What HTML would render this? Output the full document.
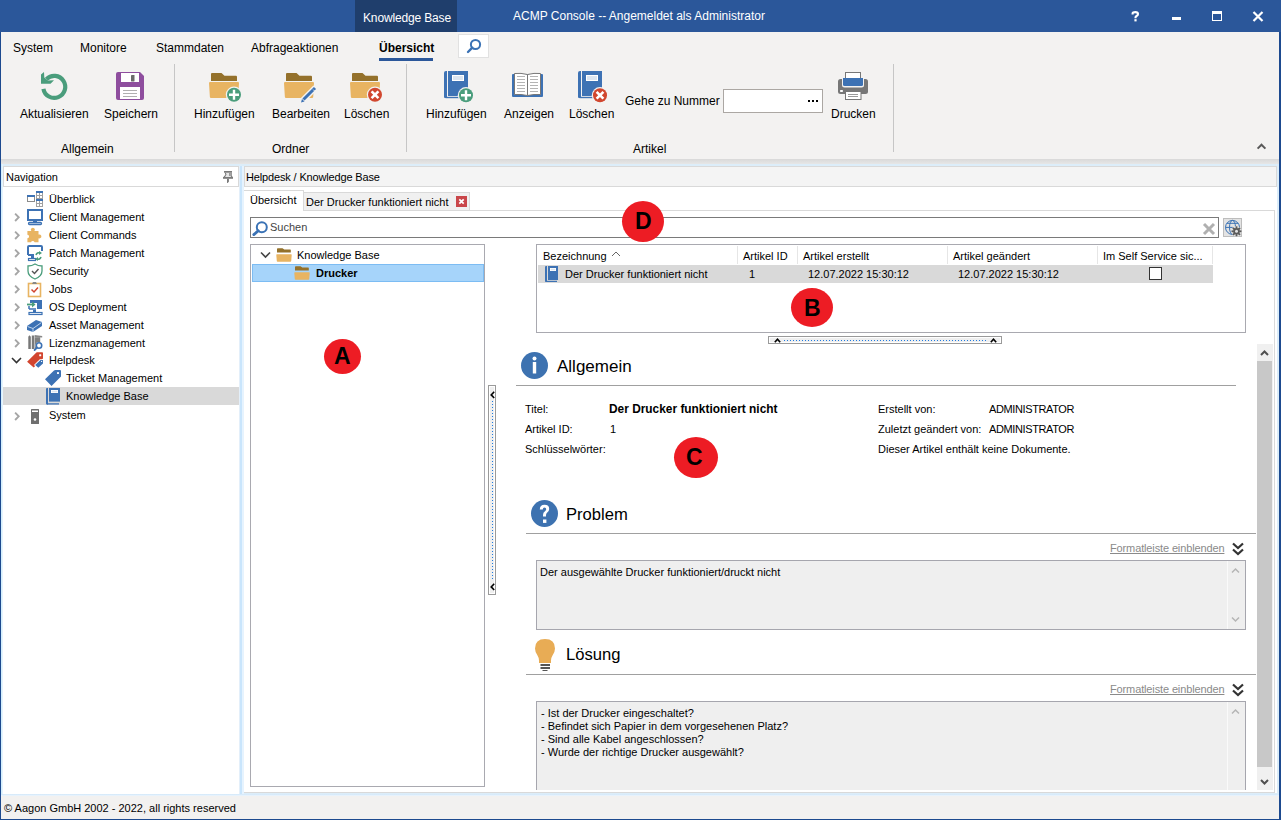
<!DOCTYPE html>
<html><head><meta charset="utf-8">
<style>
*{margin:0;padding:0;box-sizing:border-box}
html,body{width:1281px;height:820px;overflow:hidden;background:#fff;font-family:"Liberation Sans",sans-serif;color:#000}
.a{position:absolute}
.t{position:absolute;white-space:nowrap;line-height:1}
.s11{font-size:11px}
.s12{font-size:12px}
svg{position:absolute;overflow:visible}
</style></head><body>
<!-- window border -->
<div class="a" style="left:0;top:0;width:1281px;height:820px;background:#1d4a8f"></div>
<div class="a" style="left:0;top:0;width:1281px;height:32px;background:#2b579a"></div>
<!-- title bar -->
<div class="a" style="left:355px;top:0;width:102px;height:32px;background:#1f3e6c"></div>
<div class="t s12" style="left:363px;top:12px;color:#fff;letter-spacing:-0.15px">Knowledge Base</div>
<div class="t s12" style="left:513px;top:10px;color:#fff">ACMP Console -- Angemeldet als Administrator</div>
<svg style="left:1131px;top:11px" width="9" height="11" viewBox="0 0 9 11"><path d="M1.6 3.4V2.6Q1.6 1.1 4.3 1.1Q7 1.1 7 3Q7 4.3 5.6 5Q4.5 5.6 4.5 6.6V7.2" fill="none" stroke="#fff" stroke-width="2.1"/><rect x="3.4" y="8.2" width="2.2" height="2.2" fill="#fff"/></svg>
<div class="a" style="left:1172px;top:17px;width:9px;height:3px;background:#fff"></div>
<div class="a" style="left:1212px;top:11px;width:10px;height:10px;border:1px solid #fff;border-top-width:3px"></div>
<svg style="left:1252px;top:11px" width="12" height="11"><path d="M1.5 1L10.5 10M10.5 1L1.5 10" stroke="#fff" stroke-width="2.2"/></svg>

<!-- ribbon -->
<div class="a" style="left:1px;top:32px;width:1278px;height:127px;background:#f3f2f1"></div>
<div class="a" style="left:1px;top:159px;width:1278px;height:5px;background:linear-gradient(#d9d9d9,#e6e6e6)"></div>
<div class="a" style="left:1px;top:164px;width:1278px;height:632px;background:linear-gradient(90deg,#d4effd 0 1px,#e6f4fd 1px 2px,#dcedf9 2px)"></div>

<!-- ribbon tabs -->
<div class="t s12" style="left:13px;top:42px">System</div>
<div class="t s12" style="left:80px;top:42px">Monitore</div>
<div class="t s12" style="left:156px;top:42px">Stammdaten</div>
<div class="t s12" style="left:251px;top:42px">Abfrageaktionen</div>
<div class="t s12" style="left:379px;top:42px;font-weight:bold">Übersicht</div>
<div class="a" style="left:379px;top:58px;width:54px;height:3px;background:#2b579a"></div>
<div class="a" style="left:458px;top:34px;width:31px;height:24px;background:#fff;border:1px solid #e1e1e1"></div>
<svg style="left:466px;top:38px" width="16" height="16"><circle cx="9.5" cy="6.5" r="4.6" fill="none" stroke="#3a72b5" stroke-width="2"/><path d="M6.3 9.7L2 14" stroke="#3a72b5" stroke-width="2.4" stroke-linecap="round"/></svg>

<!-- separators -->
<div class="a" style="left:174px;top:64px;width:1px;height:88px;background:#c6c6c6"></div>
<div class="a" style="left:406px;top:64px;width:1px;height:88px;background:#c6c6c6"></div>
<div class="a" style="left:893px;top:64px;width:1px;height:88px;background:#c6c6c6"></div>

<!-- Allgemein group -->
<svg style="left:36px;top:68px" width="36" height="36" viewBox="0 0 36 36"><path d="M7.42 20.81A11 11 0 1 0 10.47 11.12" fill="none" stroke="#4a9d7c" stroke-width="4.2"/><path d="M5 6.5L8 4L8.3 9.6L12 12.6L18 12.3L14.5 15.8H5Z" fill="#4a9d7c"/></svg>
<svg style="left:116px;top:72px" width="28" height="28" viewBox="0 0 28 28"><path d="M2 0H24L28 4V26Q28 28 26 28H2Q0 28 0 26V2Q0 0 2 0Z" fill="#8e4e9e"/><rect x="5" y="1" width="18" height="9" fill="#fff"/><rect x="15" y="3" width="3.5" height="6.5" rx=".4" fill="#6a6a6a"/><rect x="4" y="15" width="20" height="12" fill="#fff"/><path d="M7 18.5H21M7 21.5H21M7 24.5H21" stroke="#b0b0b0" stroke-width="1"/></svg>
<div class="t s12" style="left:20px;top:108px">Aktualisieren</div>
<div class="t s12" style="left:104px;top:108px">Speichern</div>
<div class="t s12" style="left:61px;top:143px">Allgemein</div>

<!-- Ordner group -->
<svg style="left:204px;top:68px" width="40" height="40" viewBox="0 0 40 40"><path d="M8 5H17.5L20.5 7.8H32Q33 7.8 33 9V13H7V6Q7 5 8 5Z" fill="#94712b"/><path d="M6 14H34Q35 14 35 15.2L34.2 29Q34.1 30 33 30H7Q6 30 5.9 29L5 15.2Q5 14 6 14Z" fill="#e8b462"/><circle cx="30" cy="26.8" r="8.2" fill="#f3f2f1"/><circle cx="30" cy="26.8" r="7" fill="#4a9d7c"/><path d="M30 21.8V31.8M25 26.8H35" stroke="#fff" stroke-width="2.4"/></svg>
<svg style="left:279px;top:68px" width="40" height="40" viewBox="0 0 40 40"><path d="M8 5H17.5L20.5 7.8H32Q33 7.8 33 9V13H7V6Q7 5 8 5Z" fill="#94712b"/><path d="M6 14H34Q35 14 35 15.2L34.2 29Q34.1 30 33 30H7Q6 30 5.9 29L5 15.2Q5 14 6 14Z" fill="#e8b462"/><path d="M36.5 19.5L23 33" stroke="#f3f2f1" stroke-width="6"/><path d="M36 20L24.5 31.5" stroke="#3d72b4" stroke-width="3"/><path d="M22 34.5L23 31L25.5 33.5Z" fill="#3d72b4"/><path d="M34.2 21.6L35.6 23" stroke="#fff" stroke-width="0.8"/></svg>
<svg style="left:345px;top:68px" width="40" height="40" viewBox="0 0 40 40"><path d="M8 5H17.5L20.5 7.8H32Q33 7.8 33 9V13H7V6Q7 5 8 5Z" fill="#94712b"/><path d="M6 14H34Q35 14 35 15.2L34.2 29Q34.1 30 33 30H7Q6 30 5.9 29L5 15.2Q5 14 6 14Z" fill="#e8b462"/><circle cx="30" cy="26.8" r="8.2" fill="#f3f2f1"/><circle cx="30" cy="26.8" r="7" fill="#d1472f"/><path d="M26.6 23.4L33.4 30.2M33.4 23.4L26.6 30.2" stroke="#fff" stroke-width="2.6"/></svg>
<div class="t s12" style="left:194px;top:108px">Hinzufügen</div>
<div class="t s12" style="left:272px;top:108px">Bearbeiten</div>
<div class="t s12" style="left:344px;top:108px">Löschen</div>
<div class="t s12" style="left:272px;top:143px">Ordner</div>

<!-- Artikel group -->
<svg style="left:438px;top:66px" width="40" height="40" viewBox="0 0 40 40"><path d="M8 5H9V32H7Q6 32 6 31V7Q6 5 8 5Z" fill="#3d72b4"/><rect x="10" y="5" width="20" height="25" fill="#3d72b4"/><path d="M7.5 31.5H21" stroke="#3d72b4" stroke-width="1.4"/><rect x="14" y="9" width="12" height="6" fill="#fff"/><rect x="15" y="10" width="10" height="4" fill="#dbe5f0"/><circle cx="28" cy="29.3" r="8.2" fill="#f3f2f1"/><circle cx="28" cy="29.3" r="7" fill="#4a9d7c"/><path d="M28 24.3V34.3M23 29.3H33" stroke="#fff" stroke-width="2.4"/></svg>
<svg style="left:507px;top:66px" width="40" height="40" viewBox="0 0 40 40"><rect x="5" y="8" width="31" height="23" rx="1" fill="#3d72b4"/><path d="M7.5 7.5Q14 6.8 20.5 8.5V29.5Q14 28 7.5 28.5Z" fill="#fff" stroke="#777" stroke-width="1"/><path d="M33.5 7.5Q27 6.8 20.5 8.5V29.5Q27 28 33.5 28.5Z" fill="#fff" stroke="#777" stroke-width="1"/><path d="M10 10.5H18M23 10.5H31" stroke="#b4b4b4" stroke-width="1"/><path d="M10 13.5H18M23 13.5H31" stroke="#b4b4b4" stroke-width="1"/><path d="M10 16.5H18M23 16.5H31" stroke="#b4b4b4" stroke-width="1"/><path d="M10 19.5H18M23 19.5H31" stroke="#b4b4b4" stroke-width="1"/><path d="M10 22.5H18M23 22.5H31" stroke="#b4b4b4" stroke-width="1"/><path d="M10 25.5H18M23 25.5H31" stroke="#b4b4b4" stroke-width="1"/></svg>
<svg style="left:572px;top:66px" width="40" height="40" viewBox="0 0 40 40"><path d="M8 5H9V32H7Q6 32 6 31V7Q6 5 8 5Z" fill="#3d72b4"/><rect x="10" y="5" width="20" height="25" fill="#3d72b4"/><path d="M7.5 31.5H21" stroke="#3d72b4" stroke-width="1.4"/><rect x="14" y="9" width="12" height="6" fill="#fff"/><rect x="15" y="10" width="10" height="4" fill="#dbe5f0"/><circle cx="28" cy="29.3" r="8.2" fill="#f3f2f1"/><circle cx="28" cy="29.3" r="7" fill="#d1472f"/><path d="M24.6 25.9L31.4 32.7M31.4 25.9L24.6 32.7" stroke="#fff" stroke-width="2.6"/></svg>
<div class="t s12" style="left:426px;top:108px">Hinzufügen</div>
<div class="t s12" style="left:504px;top:108px">Anzeigen</div>
<div class="t s12" style="left:569px;top:108px">Löschen</div>
<div class="t s12" style="left:625px;top:95px">Gehe zu Nummer</div>
<div class="a" style="left:723px;top:89px;width:100px;height:24px;background:#fff;border:1px solid #aba7a3"></div>
<div class="a" style="left:808px;top:100px;width:2px;height:2px;background:#000"></div><div class="a" style="left:812px;top:100px;width:2px;height:2px;background:#000"></div><div class="a" style="left:816px;top:100px;width:2px;height:2px;background:#000"></div>
<svg style="left:832px;top:66px" width="40" height="40" viewBox="0 0 40 40"><rect x="13.5" y="6.5" width="15" height="7" fill="#fff" stroke="#777" stroke-width="1"/><rect x="6" y="13" width="30" height="15" rx="2.5" fill="#777"/><path d="M10 12H32V19Q32 21.5 29.5 21.5H12.5Q10 21.5 10 19Z" fill="#f3f2f1"/><path d="M11 12H31V18.5Q31 20 29.5 20H12.5Q11 20 11 18.5Z" fill="#3d72b4"/><rect x="8" y="24" width="3" height="2" rx=".8" fill="#fff"/><rect x="13.5" y="25.5" width="15.5" height="8" fill="#fff" stroke="#777" stroke-width="1"/><path d="M16 28.5H26M16 30.5H26" stroke="#999" stroke-width="1"/></svg>
<div class="t s12" style="left:831px;top:108px">Drucken</div>
<div class="t s12" style="left:633px;top:143px">Artikel</div>
<svg style="left:1256px;top:143px" width="11" height="8"><path d="M1.6 5.6L5.5 1.7L9.4 5.6" fill="none" stroke="#595959" stroke-width="2"/></svg>

<!-- NAV PANEL -->
<div class="a" style="left:3px;top:166px;width:236px;height:628px;background:#fff"></div>
<div class="a" style="left:3px;top:166px;width:236px;height:21px;background:#fff;border:1px solid #d9d9d9"></div>
<div class="t s11" style="left:6px;top:172px">Navigation</div>
<svg style="left:218px;top:166px" width="20" height="20" viewBox="0 0 20 20"><path d="M7 6.5H13V11H6.5Q8.5 9 7.5 8Z" fill="#e6e6e6"/><rect x="11" y="7" width="1.6" height="3" fill="#9a9a9a"/><rect x="6" y="5" width="8" height="1.7" fill="#7a7a7a"/><path d="M7.2 6.8Q8.6 8.3 7.4 9.6L6 11M13.2 6.8V10L14.2 11" fill="none" stroke="#7a7a7a" stroke-width="1.1"/><rect x="5" y="11" width="10" height="1.8" fill="#7a7a7a"/><path d="M9 12.8H10.9V15.8L9.6 17H9Z" fill="#7a7a7a"/></svg>
<div class="a" style="left:3px;top:387px;width:236px;height:18px;background:#d9d9d9"></div>
<svg style="left:27px;top:191px" width="16" height="16" viewBox="0 0 16 16"><rect x="0.5" y="4.5" width="7" height="6" fill="#fff" stroke="#8c8c8c"/><rect x="0" y="4" width="8" height="2" fill="#3d72b4"/><rect x="9.5" y="1.5" width="6" height="6" fill="#fff" stroke="#a0a0a0"/><rect x="9" y="0" width="7" height="2" fill="#3d72b4"/><path d="M12.5 2V7M10 4.5H15" stroke="#a0a0a0"/><rect x="9.5" y="9.5" width="6" height="6" fill="#fff" stroke="#a0a0a0"/><rect x="9" y="8" width="7" height="2" fill="#3d72b4"/><path d="M12.5 10V15M10 12.5H15" stroke="#a0a0a0"/></svg>
<div class="t s11" style="left:49px;top:194px">Überblick</div>
<svg style="left:27px;top:209px" width="16" height="16" viewBox="0 0 16 16"><rect x="1" y="1" width="14" height="10" fill="#fff" stroke="#3d72b4" stroke-width="2"/><rect x="6" y="11" width="4" height="2" fill="#3d72b4"/><rect x="1.5" y="13.5" width="13" height="2" rx="1" fill="#fff" stroke="#3d72b4" stroke-width="1.3"/></svg>
<div class="t s11" style="left:49px;top:212px">Client Management</div>
<svg style="left:13px;top:212px" width="8" height="10"><path d="M2.1 1.6L5.7 5.3L2.1 9" fill="none" stroke="#a6a6a6" stroke-width="1.9"/></svg>
<svg style="left:27px;top:227px" width="16" height="16" viewBox="0 0 16 16"><path d="M0.4 4H4.3A2 2 0 1 1 7.4 4H11.5V7.6A2 2 0 1 1 11.5 11.2V15.3H7.6A1.9 1.9 0 0 0 4 15.3H0.4V11.2A1.7 1.7 0 0 0 0.4 7.8Z" fill="#e8b462"/></svg>
<div class="t s11" style="left:49px;top:230px">Client Commands</div>
<svg style="left:13px;top:230px" width="8" height="10"><path d="M2.1 1.6L5.7 5.3L2.1 9" fill="none" stroke="#a6a6a6" stroke-width="1.9"/></svg>
<svg style="left:27px;top:245px" width="16" height="16" viewBox="0 0 16 16"><path d="M1 10V2Q1 1 2 1H14Q15 1 15 2V6" fill="none" stroke="#3d72b4" stroke-width="2"/><path d="M1 10H7" stroke="#3d72b4" stroke-width="2"/><rect x="4" y="11" width="3" height="2" fill="#3d72b4"/><rect x="1.5" y="13.5" width="7" height="2" fill="#fff" stroke="#3d72b4" stroke-width="1.2"/><path d="M9 10Q10 7 13 8M14 12Q13 15 10 14" fill="none" stroke="#4a9d7c" stroke-width="1.6"/><path d="M12 6L15 8L12 10Z M11 12L8 14L11 16Z" fill="#4a9d7c"/></svg>
<div class="t s11" style="left:49px;top:248px">Patch Management</div>
<svg style="left:13px;top:248px" width="8" height="10"><path d="M2.1 1.6L5.7 5.3L2.1 9" fill="none" stroke="#a6a6a6" stroke-width="1.9"/></svg>
<svg style="left:27px;top:263px" width="16" height="16" viewBox="0 0 16 16"><path d="M8 1Q11 3 15 3V8Q15 13 8 16Q1 13 1 8V3Q5 3 8 1Z" fill="#fff" stroke="#4a9d7c" stroke-width="1.3"/><path d="M5 8L7.5 10.5L11.5 6" fill="none" stroke="#555" stroke-width="1.4"/></svg>
<div class="t s11" style="left:49px;top:266px">Security</div>
<svg style="left:13px;top:266px" width="8" height="10"><path d="M2.1 1.6L5.7 5.3L2.1 9" fill="none" stroke="#a6a6a6" stroke-width="1.9"/></svg>
<svg style="left:27px;top:281px" width="16" height="16" viewBox="0 0 16 16"><rect x="1.5" y="2.5" width="12" height="13" fill="#fff" stroke="#e8b462" stroke-width="1.6"/><path d="M5 3L6 1H9L10 3Z" fill="#888"/><path d="M4.5 8.5L7 11L11 6.5" fill="none" stroke="#d2452f" stroke-width="1.5"/></svg>
<div class="t s11" style="left:49px;top:284px">Jobs</div>
<svg style="left:13px;top:284px" width="8" height="10"><path d="M2.1 1.6L5.7 5.3L2.1 9" fill="none" stroke="#a6a6a6" stroke-width="1.9"/></svg>
<svg style="left:27px;top:299px" width="16" height="16" viewBox="0 0 16 16"><path d="M3 1H15V10H10V4H3Z" fill="#3d72b4"/><path d="M2 10H9M2 7V10" fill="none" stroke="#3d72b4" stroke-width="1.5"/><rect x="6" y="11" width="3" height="2" fill="#3d72b4"/><rect x="2" y="13.5" width="13" height="2" fill="#fff" stroke="#3d72b4" stroke-width="1.2"/><path d="M0 5.5H6" stroke="#4a9d7c" stroke-width="1.8"/><path d="M5 2.5L8.5 5.5L5 8.5Z" fill="#4a9d7c"/></svg>
<div class="t s11" style="left:49px;top:302px">OS Deployment</div>
<svg style="left:13px;top:302px" width="8" height="10"><path d="M2.1 1.6L5.7 5.3L2.1 9" fill="none" stroke="#a6a6a6" stroke-width="1.9"/></svg>
<svg style="left:27px;top:317px" width="16" height="16" viewBox="0 0 16 16"><path d="M0 9L9 3L15 5L15 9L6 15L0 13Z" fill="#3d72b4"/><path d="M0.5 9.5L6 11.5L14.5 5.5M6 11.5V15" fill="none" stroke="#cfe0f3" stroke-width="0.9"/></svg>
<div class="t s11" style="left:49px;top:320px">Asset Management</div>
<svg style="left:13px;top:320px" width="8" height="10"><path d="M2.1 1.6L5.7 5.3L2.1 9" fill="none" stroke="#a6a6a6" stroke-width="1.9"/></svg>
<svg style="left:27px;top:335px" width="16" height="16" viewBox="0 0 16 16"><path d="M1.3 1.8L2.5 0.2L3.8 1.8V14H1.3Z" fill="#777"/><rect x="4.8" y="0.5" width="2.4" height="13.5" fill="#7a7a7a"/><path d="M7.6 0L15.2 0.9V2.6L7.6 2Z" fill="#888"/><rect x="7.6" y="2.2" width="5.6" height="11.8" fill="#7f7f7f"/><circle cx="12" cy="10.5" r="3.5" fill="#fff"/><circle cx="12" cy="10.5" r="2.7" fill="#fff" stroke="#3d72b4" stroke-width="1.6"/><path d="M10 12.6L7.6 15" stroke="#3d72b4" stroke-width="1.8" stroke-linecap="round"/></svg>
<div class="t s11" style="left:49px;top:338px">Lizenzmanagement</div>
<svg style="left:13px;top:338px" width="8" height="10"><path d="M2.1 1.6L5.7 5.3L2.1 9" fill="none" stroke="#a6a6a6" stroke-width="1.9"/></svg>
<svg style="left:27px;top:353px" width="16" height="16" viewBox="0 0 16 16"><path d="M0.1 8.7L9.4 -0.6Q9.6 -.8 10 -.8H15.2Q16 -.8 16 0V5.5L6.7 14.6Z" fill="#d2452f"/><rect x="12.2" y="1.2" width="2" height="2" rx=".5" fill="#fff"/><path d="M7 12L12.8 6.2H16.8V10.8L11.3 16.3Z" fill="#fff"/><path d="M8.2 12L13.5 7H16V10.5L11.3 14.8Z" fill="#3d72b4"/><circle cx="14.6" cy="8.4" r=".6" fill="#fff"/></svg>
<div class="t s11" style="left:49px;top:355px">Helpdesk</div>
<svg style="left:11px;top:357px" width="11" height="7"><path d="M1 1L5.5 5.5L10 1" fill="none" stroke="#333" stroke-width="1.6"/></svg>
<svg style="left:45px;top:371px" width="16" height="16" viewBox="0 0 16 16"><path d="M0 8.2L9 -0.4Q9.6 -1 10.4 -1H15Q16 -1 16 0V5.6L6.5 15Z" fill="#3d72b4"/><rect x="12" y="1" width="2" height="2" rx=".6" fill="#fff"/></svg>
<div class="t s11" style="left:66px;top:373px">Ticket Management</div>
<svg style="left:45px;top:389px" width="16" height="16" viewBox="0 0 16 16"><path d="M2 -1H3V15.5H2Q1 15.5 1 14.5V0Q1 -1 2 -1Z" fill="#3d72b4"/><rect x="4" y="-1" width="11" height="13.6" fill="#3d72b4"/><path d="M1.8 14.9H14" stroke="#3d72b4" stroke-width="1.3"/><rect x="6" y="1" width="7" height="3" fill="#fff"/><rect x="6.7" y="1.7" width="5.6" height="1.6" fill="#dbe5f0"/></svg>
<div class="t s11" style="left:66px;top:391px">Knowledge Base</div>
<svg style="left:27px;top:408px" width="16" height="16" viewBox="0 0 16 16"><rect x="4" y="1" width="8" height="15" rx=".5" fill="#6f6f6f"/><rect x="5" y="2.5" width="6" height="1.5" fill="#fff"/><circle cx="8" cy="11.5" r="1.3" fill="#fff"/></svg>
<div class="t s11" style="left:49px;top:410px">System</div>
<svg style="left:13px;top:411px" width="8" height="10"><path d="M2.1 1.6L5.7 5.3L2.1 9" fill="none" stroke="#a6a6a6" stroke-width="1.9"/></svg>

<!-- MAIN PANEL -->
<div class="a" style="left:239px;top:166px;width:5px;height:628px;background:linear-gradient(90deg,#e3effa 0 1px,#c9e5fc 1px 3px,#e6f3fe 3px 5px)"></div>
<div class="a" style="left:244px;top:166px;width:1033px;height:627px;background:#fff"></div>
<div class="a" style="left:244px;top:166px;width:1033px;height:21px;background:#f4f4f4;border:1px solid #d9d9d9"></div>
<div class="t s11" style="left:246px;top:172px;letter-spacing:-0.15px">Helpdesk / Knowledge Base</div>
<!-- tab content border -->
<div class="a" style="left:244px;top:210px;width:1031px;height:583px;border:1px solid #d9d9d9;border-left:none"></div>
<div class="a" style="left:244px;top:190px;width:60px;height:21px;background:#fff;border:1px solid #d9d9d9;border-bottom:none;border-left:none"></div>
<div class="t s11" style="left:250px;top:195px">Übersicht</div>
<div class="a" style="left:303px;top:192px;width:167px;height:19px;background:#f0f0f0;border:1px solid #d9d9d9"></div>
<div class="t s11" style="left:306px;top:197px">Der Drucker funktioniert nicht</div>
<div class="a" style="left:456px;top:196px;width:11px;height:11px;background:#c9464a"></div>
<svg style="left:456px;top:196px" width="11" height="11"><path d="M3.3 3.3L7.7 7.7M7.7 3.3L3.3 7.7" stroke="#fff" stroke-width="1.7"/></svg>

<!-- search -->
<div class="a" style="left:250px;top:217px;width:969px;height:21px;background:#fff;border:1px solid #7a7a7a"></div>
<svg style="left:252px;top:220px" width="16" height="16" viewBox="0 0 16 16"><circle cx="9.8" cy="7.2" r="5" fill="none" stroke="#3a72b5" stroke-width="2"/><path d="M6.3 10.8L1.8 14.6" stroke="#3a72b5" stroke-width="2.8" stroke-linecap="round"/></svg>
<div class="t s11" style="left:270px;top:222px;color:#444">Suchen</div>
<svg style="left:1202px;top:222px" width="14" height="14"><path d="M2 2L12 12M12 2L2 12" stroke="#b0b0b0" stroke-width="3"/></svg>
<div class="a" style="left:1223px;top:218px;width:19px;height:19px;background:#e3e3e3;border:1px solid #bdbdbd"></div>
<svg style="left:1220px;top:215px" width="26" height="26" viewBox="0 0 26 26"><g fill="none" stroke="#3a72b5" stroke-width="1"><circle cx="12.5" cy="12.4" r="7"/><ellipse cx="12.5" cy="12.4" rx="3" ry="7"/><path d="M6.7 8.3H18.3M5.5 12.4H12.8"/></g><circle cx="16.5" cy="16.3" r="5.2" fill="#e3e3e3"/><rect x="15.6" y="11.3" width="1.8" height="2.2" fill="#5a5a5a" transform="rotate(0 16.5 16.3)"/><rect x="15.6" y="11.3" width="1.8" height="2.2" fill="#5a5a5a" transform="rotate(45 16.5 16.3)"/><rect x="15.6" y="11.3" width="1.8" height="2.2" fill="#5a5a5a" transform="rotate(90 16.5 16.3)"/><rect x="15.6" y="11.3" width="1.8" height="2.2" fill="#5a5a5a" transform="rotate(135 16.5 16.3)"/><rect x="15.6" y="11.3" width="1.8" height="2.2" fill="#5a5a5a" transform="rotate(180 16.5 16.3)"/><rect x="15.6" y="11.3" width="1.8" height="2.2" fill="#5a5a5a" transform="rotate(225 16.5 16.3)"/><rect x="15.6" y="11.3" width="1.8" height="2.2" fill="#5a5a5a" transform="rotate(270 16.5 16.3)"/><rect x="15.6" y="11.3" width="1.8" height="2.2" fill="#5a5a5a" transform="rotate(315 16.5 16.3)"/><circle cx="16.5" cy="16.3" r="3.3" fill="#5a5a5a"/><circle cx="16.5" cy="16.3" r="1.5" fill="#e3e3e3"/></svg>

<!-- tree box -->
<div class="a" style="left:250px;top:244px;width:235px;height:543px;border:1px solid #a9a9b0"></div>
<svg style="left:260px;top:251px" width="11" height="8"><path d="M1 1.5L5.5 6L10 1.5" fill="none" stroke="#444" stroke-width="1.6"/></svg>
<svg style="left:276px;top:248px" width="17" height="14" viewBox="0 0 17 14"><path d="M1.8 0.2H6.5L8.3 1.6H14.3Q14.8 1.6 14.8 2.2V4.5H1V1Q1 .2 1.8 .2Z" fill="#94712b"/><path d="M0.8 6.3H15.2Q15.7 6.3 15.7 6.9L15.2 13Q15.1 13.7 14.5 13.7H1.5Q0.9 13.7 0.8 13L0.3 6.9Q0.3 6.3 0.8 6.3Z" fill="#e8b462"/></svg>
<div class="t s11" style="left:297px;top:250px">Knowledge Base</div>
<div class="a" style="left:252px;top:264px;width:232px;height:18px;background:#a6d4fa;border:1px solid #7cbcf3"></div>
<svg style="left:294px;top:266px" width="17" height="14" viewBox="0 0 17 14"><path d="M1.8 0.2H6.5L8.3 1.6H14.3Q14.8 1.6 14.8 2.2V4.5H1V1Q1 .2 1.8 .2Z" fill="#94712b"/><path d="M0.8 6.3H15.2Q15.7 6.3 15.7 6.9L15.2 13Q15.1 13.7 14.5 13.7H1.5Q0.9 13.7 0.8 13L0.3 6.9Q0.3 6.3 0.8 6.3Z" fill="#e8b462"/></svg>
<div class="t s11" style="left:316px;top:268px;font-weight:bold">Drucker</div>

<!-- grid -->
<div class="a" style="left:536px;top:244px;width:710px;height:89px;border:1px solid #a9a9b0"></div>
<div class="a" style="left:538px;top:265px;width:675px;height:18px;background:#d9d9d9"></div>
<div class="a" style="left:737px;top:246px;width:1px;height:18px;background:#e6e6e6"></div>
<div class="a" style="left:797px;top:246px;width:1px;height:18px;background:#e6e6e6"></div>
<div class="a" style="left:947px;top:246px;width:1px;height:18px;background:#e6e6e6"></div>
<div class="a" style="left:1097px;top:246px;width:1px;height:18px;background:#e6e6e6"></div>
<div class="a" style="left:1212px;top:246px;width:1px;height:18px;background:#e6e6e6"></div>
<div class="t s11" style="left:543px;top:251px">Bezeichnung</div>
<svg style="left:611px;top:251px" width="10" height="6"><path d="M1 5L5 1L9 5" fill="none" stroke="#666" stroke-width="1"/></svg>
<div class="t s11" style="left:743px;top:251px">Artikel ID</div>
<div class="t s11" style="left:803px;top:251px">Artikel erstellt</div>
<div class="t s11" style="left:953px;top:251px">Artikel geändert</div>
<div class="t s11" style="left:1103px;top:251px">Im Self Service sic...</div>
<svg style="left:540px;top:262px" width="30" height="24" viewBox="0 0 30 24"><path d="M6 4H7V20H6Q5 20 5 19V5Q5 4 6 4Z" fill="#3d72b4"/><rect x="8" y="4" width="10" height="14" fill="#3d72b4"/><path d="M5.6 19.4H17" stroke="#3d72b4" stroke-width="1.2"/><rect x="10" y="6" width="6" height="3" fill="#fff"/><rect x="10.7" y="6.7" width="4.6" height="1.6" fill="#dbe5f0"/></svg>
<div class="t s11" style="left:565px;top:269px">Der Drucker funktioniert nicht</div>
<div class="t s11" style="left:749px;top:269px">1</div>
<div class="t s11" style="left:808px;top:269px">12.07.2022 15:30:12</div>
<div class="t s11" style="left:958px;top:269px">12.07.2022 15:30:12</div>
<div class="a" style="left:1149px;top:267px;width:13px;height:13px;background:#fff;border:1px solid #333"></div>

<!-- splitter handle -->
<div class="a" style="left:768px;top:336px;width:234px;height:8px;border:1px solid #9a9a9a;background:#fff"></div>
<div class="a" style="left:770px;top:338px;width:230px;height:4px;background:#efefef"></div>
<div class="a" style="left:784px;top:340px;width:203px;height:1px;background:repeating-linear-gradient(90deg,#1f7ae0 0 1px,transparent 1px 3px)"></div>
<svg style="left:774px;top:338px" width="8" height="5"><path d="M0.8 4.2L3.5 1.2L6.2 4.2" fill="none" stroke="#000" stroke-width="1.6"/></svg>
<svg style="left:990px;top:338px" width="8" height="5"><path d="M0.8 4.2L3.5 1.2L6.2 4.2" fill="none" stroke="#000" stroke-width="1.6"/></svg>

<!-- vertical collapse bar -->
<div class="a" style="left:488px;top:385px;width:8px;height:210px;border:1px solid #9a9a9a;background:#fff"></div>
<div class="a" style="left:490px;top:387px;width:4px;height:206px;background:#efefef"></div>
<div class="a" style="left:492px;top:401px;width:1px;height:178px;background:repeating-linear-gradient(180deg,#1f7ae0 0 1px,transparent 1px 3px)"></div>
<svg style="left:490px;top:391px" width="5" height="8"><path d="M4.2 0.8L1.2 3.9L4.2 7" fill="none" stroke="#000" stroke-width="1.6"/></svg>
<svg style="left:490px;top:583px" width="5" height="8"><path d="M4.2 0.8L1.2 3.9L4.2 7" fill="none" stroke="#000" stroke-width="1.6"/></svg>

<!-- details -->
<svg style="left:521px;top:352px" width="27" height="27" viewBox="0 0 27 27"><circle cx="13.5" cy="13.5" r="13.5" fill="#3d72b0"/><circle cx="13.5" cy="6.5" r="2" fill="#fff"/><rect x="11.8" y="10" width="3.4" height="11.5" fill="#fff"/></svg>
<div class="t" style="left:557px;top:358px;font-size:17px">Allgemein</div>
<div class="a" style="left:516px;top:385px;width:720px;height:1px;background:#a0a0a0"></div>
<div class="t s11" style="left:525px;top:404px">Titel:</div>
<div class="t s11" style="left:609px;top:404px;font-weight:bold;font-size:11.9px">Der Drucker funktioniert nicht</div>
<div class="t s11" style="left:525px;top:424px">Artikel ID:</div>
<div class="t s11" style="left:610px;top:424px">1</div>
<div class="t s11" style="left:525px;top:444px">Schlüsselwörter:</div>
<div class="t s11" style="left:878px;top:404px">Erstellt von:</div>
<div class="t s11" style="left:989px;top:404px;letter-spacing:-0.38px">ADMINISTRATOR</div>
<div class="t s11" style="left:878px;top:424px">Zuletzt geändert von:</div>
<div class="t s11" style="left:989px;top:424px;letter-spacing:-0.38px">ADMINISTRATOR</div>
<div class="t s11" style="left:878px;top:444px">Dieser Artikel enthält keine Dokumente.</div>

<svg style="left:531px;top:500px" width="27" height="27" viewBox="0 0 27 27"><circle cx="13.5" cy="13.5" r="13.5" fill="#3d72b0"/><path d="M8.8 9.5Q8.8 4.8 13.5 4.8Q18.2 4.8 18.2 9Q18.2 11.5 15.8 13Q15 13.6 15 15.5V16.5H12V15Q12 12.5 14 11.2Q15.2 10.4 15.2 9.2Q15.2 7.6 13.5 7.6Q11.8 7.6 11.8 9.5Z" fill="#fff"/><rect x="12" y="19.5" width="3.4" height="3.4" fill="#fff"/></svg>
<div class="t" style="left:566px;top:507px;font-size:16.6px">Problem</div>
<div class="a" style="left:526px;top:533px;width:730px;height:1px;background:#a0a0a0"></div>
<div class="t s11" style="left:1110px;top:543px;color:#8a8a8a;text-decoration:underline;letter-spacing:-0.13px">Formatleiste einblenden</div>
<svg style="left:1232px;top:542px" width="12" height="14" viewBox="0 0 12 14"><path d="M1 1.5L6 6L11 1.5M1 7.5L6 12L11 7.5" fill="none" stroke="#333" stroke-width="2.2"/></svg>
<div class="a" style="left:536px;top:560px;width:710px;height:70px;background:#efefef;border:1px solid #a6a6ae"></div>
<div class="a" style="left:1227px;top:561px;width:1px;height:68px;background:#fafafa"></div>
<svg style="left:1231px;top:567px" width="9" height="7"><path d="M1 5.5L4.5 2L8 5.5" fill="none" stroke="#b5b5b5" stroke-width="1.5"/></svg>
<svg style="left:1231px;top:616px" width="9" height="7"><path d="M1 1.5L4.5 5L8 1.5" fill="none" stroke="#b5b5b5" stroke-width="1.5"/></svg>
<div class="t s11" style="left:540px;top:567px">Der ausgewählte Drucker funktioniert/druckt nicht</div>

<svg style="left:534px;top:638px" width="22" height="34" viewBox="0 0 22 34"><path d="M11 1Q21 1 21 10.5Q21 14 18.5 17.5Q17 19.8 17 22.5V25H5V22.5Q5 19.8 3.5 17.5Q1 14 1 10.5Q1 1 11 1Z" fill="#e8ac55"/><rect x="6.5" y="26" width="9.5" height="2" fill="#555"/><rect x="6.5" y="29" width="9.5" height="2" fill="#555"/><rect x="8.5" y="32" width="5" height="1" fill="#555"/></svg>
<div class="t" style="left:566px;top:647px;font-size:16.6px">Lösung</div>
<div class="a" style="left:526px;top:674px;width:730px;height:1px;background:#a0a0a0"></div>
<div class="t s11" style="left:1110px;top:684px;color:#8a8a8a;text-decoration:underline;letter-spacing:-0.13px">Formatleiste einblenden</div>
<svg style="left:1232px;top:683px" width="12" height="14" viewBox="0 0 12 14"><path d="M1 1.5L6 6L11 1.5M1 7.5L6 12L11 7.5" fill="none" stroke="#333" stroke-width="2.2"/></svg>
<div class="a" style="left:536px;top:701px;width:710px;height:89px;background:#efefef;border:1px solid #a6a6ae;border-bottom:none"></div>
<div class="a" style="left:1227px;top:702px;width:1px;height:88px;background:#fafafa"></div>
<svg style="left:1231px;top:708px" width="9" height="7"><path d="M1 5.5L4.5 2L8 5.5" fill="none" stroke="#b5b5b5" stroke-width="1.5"/></svg>
<div class="a" style="left:541px;top:707px;font-size:11px;line-height:13px;white-space:pre">- Ist der Drucker eingeschaltet?
- Befindet sich Papier in dem vorgesehenen Platz?
- Sind alle Kabel angeschlossen?
- Wurde der richtige Drucker ausgewählt?</div>

<!-- main vertical scrollbar -->
<div class="a" style="left:1257px;top:344px;width:16px;height:446px;background:#f0f0f0"></div>
<div class="a" style="left:1257px;top:361px;width:15px;height:406px;background:#c8c8c8"></div>
<svg style="left:1260px;top:349px" width="9" height="8"><path d="M1 6L4.5 2.5L8 6" fill="none" stroke="#505050" stroke-width="2"/></svg>
<svg style="left:1260px;top:778px" width="9" height="8"><path d="M1 2L4.5 5.5L8 2" fill="none" stroke="#505050" stroke-width="2"/></svg>

<!-- markers -->
<div class="a" style="left:324px;top:339px;width:37px;height:35px;border-radius:50%;background:#ed1c24"></div>
<div class="t" style="left:334px;top:345px;font-size:23px;font-weight:bold;color:#000">A</div>
<div class="a" style="left:791px;top:288px;width:42px;height:39px;border-radius:50%;background:#ed1c24"></div>
<div class="t" style="left:804px;top:297px;font-size:23px;font-weight:bold;color:#000">B</div>
<div class="a" style="left:674px;top:437px;width:44px;height:41px;border-radius:50%;background:#ed1c24"></div>
<div class="t" style="left:686px;top:446px;font-size:23px;font-weight:bold;color:#000">C</div>
<div class="a" style="left:622px;top:201px;width:42px;height:41px;border-radius:50%;background:#ed1c24"></div>
<div class="t" style="left:635px;top:210px;font-size:23px;font-weight:bold;color:#000">D</div>


<!-- status bar -->
<div class="a" style="left:1px;top:794px;width:1278px;height:2px;background:linear-gradient(#d0e7f9,#eef6fd)"></div><div class="a" style="left:1px;top:796px;width:1278px;height:23px;background:#f2f1f0"></div>
<div class="t s11" style="left:4px;top:803px">© Aagon GmbH 2002 - 2022, all rights reserved</div>
</body></html>
